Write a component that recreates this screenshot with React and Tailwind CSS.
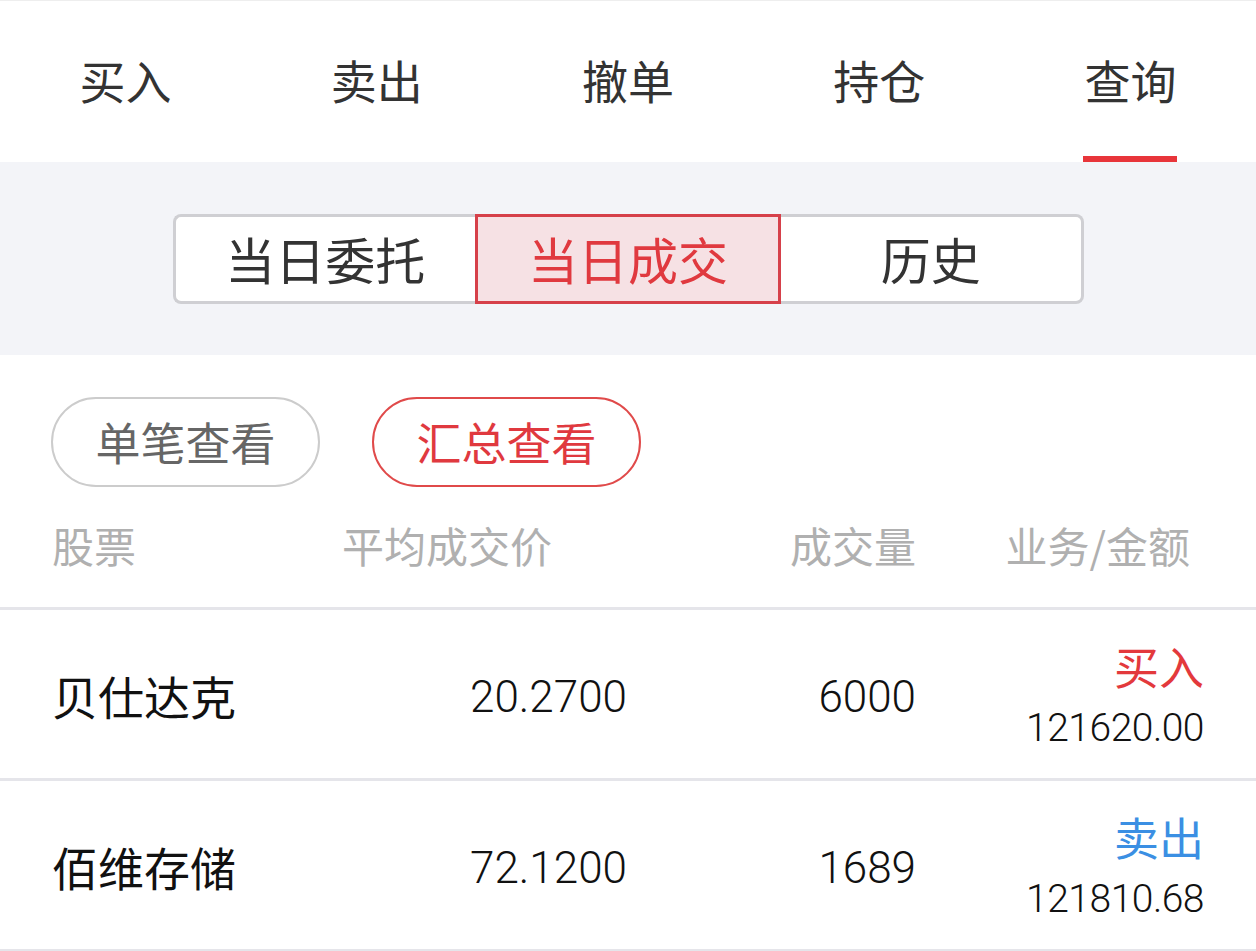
import { useState } from "react";

const tabs = ["买入", "卖出", "撤单", "持仓", "查询"];
const segs = ["当日委托", "当日成交", "历史"];

const rows = [
  { name: "贝仕达克", price: "20.2700", vol: "6000", side: "买入", amount: "121620.00", buy: true },
  { name: "佰维存储", price: "72.1200", vol: "1689", side: "卖出", amount: "121810.68", buy: false },
];

const cjk = "font-['Noto_Sans_CJK_SC',sans-serif]";
const num = "font-['Roboto','Noto_Sans_CJK_SC',sans-serif] font-light";

export default function App() {
  const [tab, setTab] = useState(4);
  const [seg, setSeg] = useState(1);
  const [mode, setMode] = useState(1);

  return (
    <div className={`w-[1256px] h-[951px] bg-white overflow-hidden ${cjk}`}>
      {/* top tabs */}
      <div className="h-[162px] border-t border-[#eeeeee] grid grid-cols-5">
        {tabs.map((t, i) => (
          <button
            key={t}
            onClick={() => setTab(i)}
            className="flex flex-col items-center"
          >
            <span className="flex-1 flex items-center text-[46px] text-[#333333] pt-[2px]">
              {t}
            </span>
            <span className={`h-[6px] w-[94px] ${tab === i ? "bg-[#e8353a]" : "bg-transparent"}`}></span>
          </button>
        ))}
      </div>

      {/* segmented control */}
      <div className="h-[193px] bg-[#f3f4f8] flex items-center justify-center">
        <div className="flex w-[911px] h-[90px]">
          {segs.map((s, i) => {
            const active = seg === i;
            let cls = "flex-1 flex items-center justify-center text-[50px] ";
            if (active) cls += "border-[3px] border-[#d6404a] bg-[#f6e1e4] text-[#e0393f] ";
            else cls += "border-[#cfcfd3] bg-white text-[#333333] border-y-[3px] ";
            if (i === 0) cls += "rounded-l-[8px] " + (active ? "" : "border-l-[3px] ");
            if (i === 2) cls += "rounded-r-[8px] " + (active ? "" : "border-r-[3px] ");
            return (
              <button key={s} onClick={() => setSeg(i)} className={cls}>
                {s}
              </button>
            );
          })}
        </div>
      </div>

      {/* pills */}
      <div className="flex gap-[52px] pl-[51px] pt-[42px]">
        {["单笔查看", "汇总查看"].map((p, i) => (
          <button
            key={p}
            onClick={() => setMode(i)}
            className={`w-[269px] h-[90px] rounded-full border-2 text-[45px] flex items-center justify-center ${
              mode === i ? "border-[#e04a4a] text-[#e0393f]" : "border-[#cccccc] text-[#666666]"
            }`}
          >
            {p}
          </button>
        ))}
      </div>

      {/* header */}
      <div className="h-[123px] pb-[6px] grid grid-cols-[290px_285px_289px_288px] pl-[52px] items-center text-[42px] text-[#b0b0b0] border-b-[3px] border-[#e5e5ea]">
        <span>股票</span>
        <span>平均成交价</span>
        <span className="text-right">成交量</span>
        <span className="text-right pr-[14px]">业务/金额</span>
      </div>

      {rows.map((r) => (
        <div
          key={r.name}
          className="h-[171px] grid grid-cols-[290px_285px_289px_288px] pl-[52px] items-center border-b-[3px] border-[#e5e5ea] text-[#111111]"
        >
          <span className="text-[46px] pt-[2px]">{r.name}</span>
          <span className={`${num} text-[44px] text-right pt-[6px]`}>{r.price}</span>
          <span className={`${num} text-[44px] text-right pt-[6px]`}>{r.vol}</span>
          <div className="flex flex-col items-end pt-[6px]">
            <span className={`text-[45px] leading-[62px] ${r.buy ? "text-[#e3393c]" : "text-[#3b8fe3]"}`}>
              {r.side}
            </span>
            <span className={`${num} text-[39px] leading-[62px] tracking-[-0.5px]`}>{r.amount}</span>
          </div>
        </div>
      ))}
    </div>
  );
}
